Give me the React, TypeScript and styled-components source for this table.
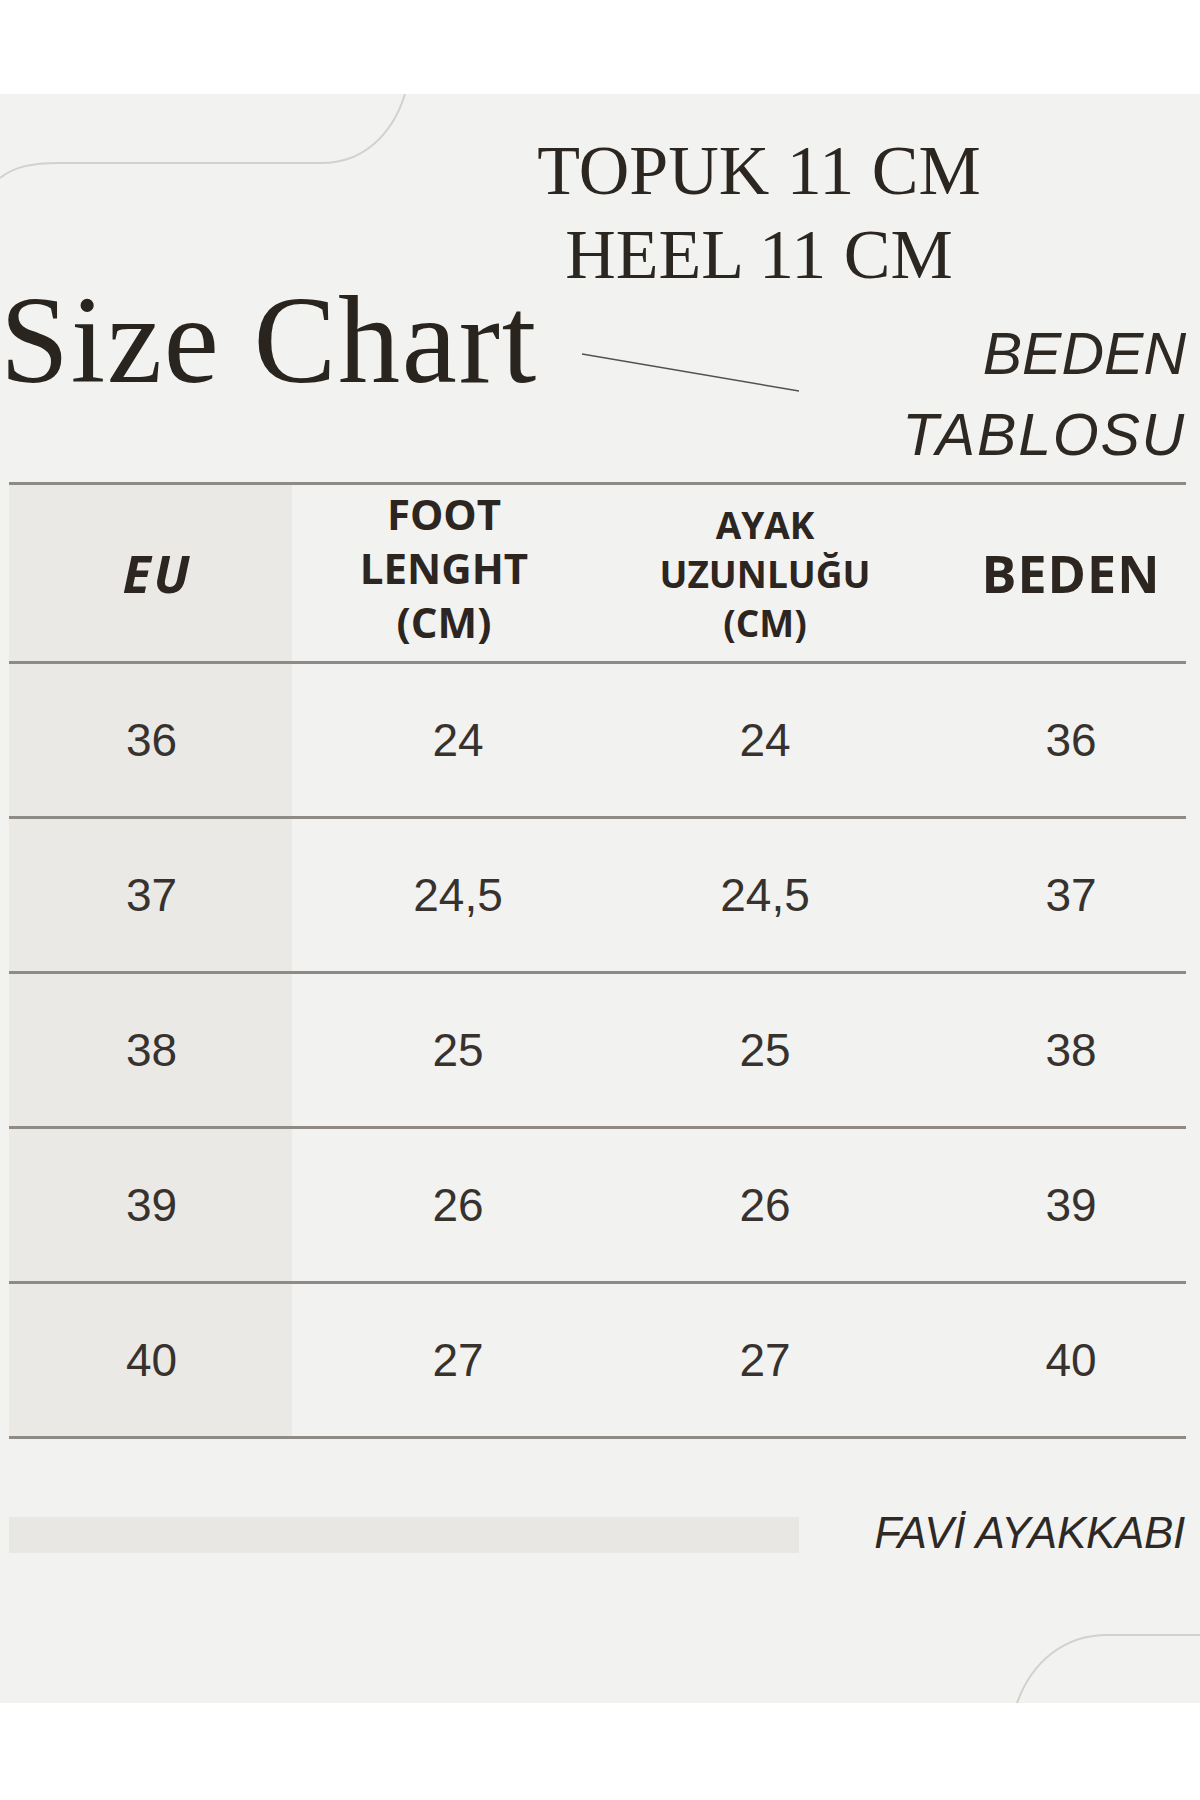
import React from "react";
import styled, { createGlobalStyle } from "styled-components";

const Global = createGlobalStyle`
  html, body { margin: 0; padding: 0; background: #ffffff; }
  body { font-family: "Liberation Sans", Arial, sans-serif; }
  * { box-sizing: border-box; }
`;

const INK = "#2c2621";
const RULE = "#8e8b87";

const Page = styled.div`
  width: 1200px;
  min-height: 1800px;
  padding-top: 94px;
  background: #ffffff;
`;

const Panel = styled.main`
  position: relative;
  height: 1609px;
  padding: 0 14px 0 9px;
  background: #f2f2f1;
  color: ${INK};
  overflow: hidden;
`;

const Decoration = styled.svg<{ $corner: "tl" | "br" }>`
  position: absolute;
  ${(p) => (p.$corner === "tl" ? "left: 0; top: 0;" : "right: 0; bottom: 0;")}
  pointer-events: none;
`;

const HeelBlock = styled.div`
  width: 500px;
  margin-left: 500px;
  padding-top: 35px;
  font-family: "Liberation Serif", "Times New Roman", serif;
  font-size: 70px;
  line-height: 84px;
  text-align: center;
  color: ${INK};
`;

const TitleRow = styled.div`
  display: grid;
  grid-template-columns: 573px 217px 1fr;
  margin-top: -18px;
`;

const Title = styled.h1`
  margin: 0 0 0 -9px;
  font-family: "Liberation Serif", "Times New Roman", serif;
  font-weight: 400;
  font-size: 124px;
  line-height: 124px;
  letter-spacing: 1.8px;
  white-space: nowrap;
  color: #2a241f;
`;

const Slash = styled.svg`
  display: block;
  margin-top: 74px;
`;

const Subtitle = styled.div`
  margin-top: 35px;
  text-align: right;
  font-family: "Liberation Sans", Arial, sans-serif;
  font-style: italic;
  font-size: 59px;
  line-height: 81px;
  color: #2e2823;
`;

const SubLine = styled.div<{ $track?: number }>`
  letter-spacing: ${(p) => p.$track ?? 0}px;
`;

const Table = styled.section`
  margin-top: 6px;
  border-top: 3px solid ${RULE};
`;

const Row = styled.div<{ $head?: boolean }>`
  display: grid;
  grid-template-columns: 283px 332px 282px 1fr;
  height: ${(p) => (p.$head ? 179 : 155)}px;
  border-bottom: 3px solid ${RULE};
`;

const Cell = styled.div<{ $shade?: boolean; $shift?: number }>`
  display: flex;
  align-items: center;
  justify-content: center;
  padding-left: ${(p) => Math.max(0, (p.$shift ?? 0) * 2)}px;
  padding-right: ${(p) => Math.max(0, -(p.$shift ?? 0) * 2)}px;
  background: ${(p) => (p.$shade ? "#ebe9e6" : "transparent")};
`;

const HeadText = styled.div<{
  $size: number;
  $lh: number;
  $lift?: number;
  $italic?: boolean;
  $track?: number;
}>`
  font-family: "Open Sans", "Liberation Sans", sans-serif;
  font-weight: 700;
  font-style: ${(p) => (p.$italic ? "italic" : "normal")};
  font-size: ${(p) => p.$size}px;
  line-height: ${(p) => p.$lh}px;
  letter-spacing: ${(p) => p.$track ?? 0}px;
  text-align: center;
  margin-top: ${(p) => -(p.$lift ?? 0)}px;
  color: #2c2520;
`;

const Num = styled.span`
  font-family: "Liberation Sans", Arial, sans-serif;
  font-size: 46px;
  color: #37322e;
`;

const Footer = styled.div`
  display: flex;
  align-items: center;
  height: 36px;
  margin-top: 78px;
`;

const FooterBar = styled.div`
  width: 790px;
  height: 36px;
  background: #e8e7e4;
`;

const Brand = styled.div`
  margin-left: auto;
  margin-right: 1px;
  margin-bottom: 5px;
  font-family: "Liberation Sans", Arial, sans-serif;
  font-style: italic;
  font-size: 44px;
  line-height: 36px;
  letter-spacing: -0.3px;
  color: #2e2924;
`;

const rows = [
  ["36", "24", "24", "36"],
  ["37", "24,5", "24,5", "37"],
  ["38", "25", "25", "38"],
  ["39", "26", "26", "39"],
  ["40", "27", "27", "40"],
];

export default function App() {
  return (
    <Page>
      <Global />
      <Panel>
        <Decoration $corner="tl" width="420" height="100" viewBox="0 0 420 100">
          <path
            d="M0 84 C 14 73 30 69 60 69 L 322 69 C 362 69 392 42 405 0"
            fill="none"
            stroke="#d3d1ce"
            strokeWidth="2"
          />
        </Decoration>
        <Decoration $corner="br" width="190" height="80" viewBox="0 0 190 80">
          <path
            d="M7 80 C 22 38 55 12 97 12 L 190 12"
            fill="none"
            stroke="#d3d1ce"
            strokeWidth="2"
          />
        </Decoration>

        <HeelBlock>
          <div>TOPUK 11 CM</div>
          <div>HEEL 11 CM</div>
        </HeelBlock>

        <TitleRow>
          <Title>Size Chart</Title>
          <Slash width="217" height="40" viewBox="0 0 217 40">
            <line x1="0" y1="1" x2="217" y2="38" stroke="#55504b" strokeWidth="1.6" />
          </Slash>
          <Subtitle>
            <SubLine>BEDEN</SubLine>
            <SubLine $track={1.8}>TABLOSU</SubLine>
          </Subtitle>
        </TitleRow>

        <Table>
          <Row $head>
            <Cell $shade $shift={7}>
              <HeadText $size={52} $lh={60} $italic $track={3}>
                EU
              </HeadText>
            </Cell>
            <Cell $shift={-14}>
              <HeadText $size={42} $lh={54} $lift={10}>
                FOOT
                <br />
                LENGHT
                <br />
                (CM)
              </HeadText>
            </Cell>
            <Cell>
              <HeadText $size={37} $lh={49}>
                AYAK
                <br />
                UZUNLUĞU
                <br />
                (CM)
              </HeadText>
            </Cell>
            <Cell $shift={25}>
              <HeadText $size={52} $lh={60} $track={1}>
                BEDEN
              </HeadText>
            </Cell>
          </Row>
          {rows.map((r) => (
            <Row key={r[0]}>
              <Cell $shade $shift={1}>
                <Num>{r[0]}</Num>
              </Cell>
              <Cell>
                <Num>{r[1]}</Num>
              </Cell>
              <Cell>
                <Num>{r[2]}</Num>
              </Cell>
              <Cell $shift={25}>
                <Num>{r[3]}</Num>
              </Cell>
            </Row>
          ))}
        </Table>

        <Footer>
          <FooterBar />
          <Brand>FAVİ AYAKKABI</Brand>
        </Footer>
      </Panel>
    </Page>
  );
}
